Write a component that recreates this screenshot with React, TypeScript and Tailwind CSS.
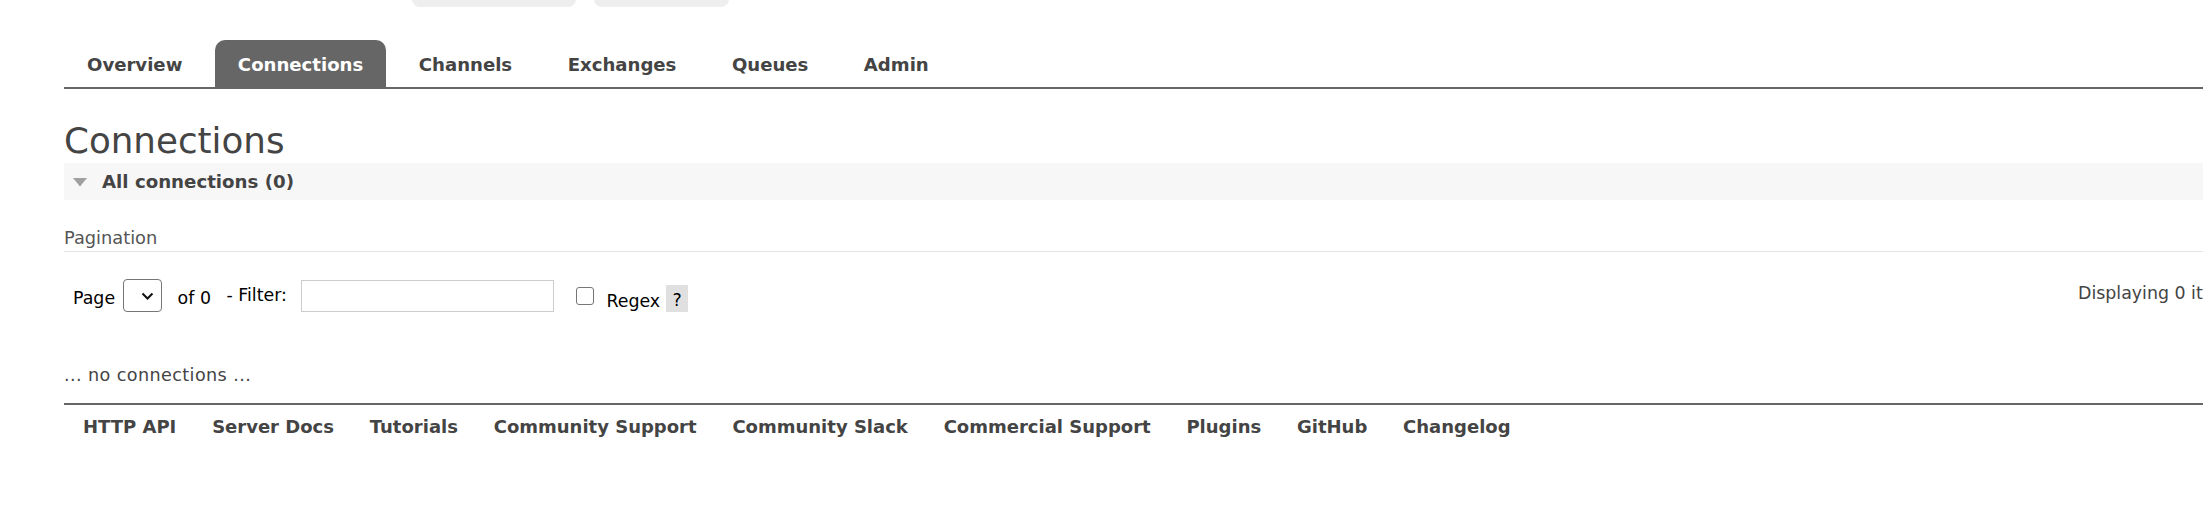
import React from "react";

const tabs = ["Overview", "Connections", "Channels", "Exchanges", "Queues", "Admin"];
const footer = [
  "HTTP API",
  "Server Docs",
  "Tutorials",
  "Community Support",
  "Community Slack",
  "Commercial Support",
  "Plugins",
  "GitHub",
  "Changelog",
];

export default function App() {
  return (
    <div
      className="w-full h-[508px] overflow-hidden bg-white text-[#444]"
      style={{ fontFamily: '"DejaVu Sans", Verdana, sans-serif' }}
    >
      {/* clipped header remnants */}
      <div className="h-[7px] overflow-hidden flex pl-[412px]">
        <div className="w-[164px] h-[30px] -mt-[23px] rounded-[8px] bg-[#eeeeee]" />
        <div className="w-[135px] h-[30px] -mt-[23px] ml-[18px] rounded-[8px] bg-[#eeeeee]" />
      </div>

      <div className="pl-[64px]">
        {/* nav */}
        <div className="mt-[33px] flex items-end border-b-2 border-[#666]">
          {tabs.map((t) => (
            <div
              key={t}
              className={
                t === "Connections"
                  ? "h-[47px] px-[23px] pt-[2px] mr-[9.5px] flex items-center rounded-t-[10px] bg-[#666] text-white font-bold text-[18.1px]"
                  : "h-[47px] px-[23px] pt-[2px] mr-[9.5px] flex items-center text-[#444] font-bold text-[18.1px]"
              }
            >
              {t}
            </div>
          ))}
        </div>

        {/* heading */}
        <h1 className="mt-[31px] text-[35.7px] leading-[42px] font-normal text-[#444]">Connections</h1>

        <div className="mt-[1px] h-[37px] bg-[#f7f7f7] flex items-center pl-[9px]">
          <svg width="14" height="9" viewBox="0 0 14 9" className="mt-[2px]">
            <polygon points="0,0 14,0 7,8.5" fill="#a0a0a0" />
          </svg>
          <span className="ml-[15px] font-bold text-[18.2px] text-[#444]">All connections (0)</span>
        </div>

        <div className="mt-[28px] text-[17.8px] leading-[20px] text-[#555] pb-[3px] border-b border-[#e2e2e2]">
          Pagination
        </div>

        {/* pagination row */}
        <div className="mt-[27px] flex items-center pl-[9px] text-[17.4px] text-black h-[33px]">
          <span className="leading-[20px] mt-[5px]">Page</span>
          <div className="ml-[7.5px] w-[39px] h-[33px] border border-[#767676] rounded-[4px] bg-white flex items-center justify-end pr-[7px]">
            <svg width="13" height="8" viewBox="0 0 13 8">
              <polyline points="1.5,1.5 6.5,6.5 11.5,1.5" fill="none" stroke="#111" strokeWidth="2" />
            </svg>
          </div>
          <span className="ml-[16px] leading-[20px] mt-[5px]">of 0</span>
          <span className="ml-[15.5px] leading-[20px] -mt-[1px]">- Filter:</span>
          <div className="ml-[14.5px] w-[253px] h-[32px] border border-[#cccccc] bg-white" />
          <div className="ml-[22px] w-[18px] h-[18px] border-[1.5px] border-[#767676] rounded-[3px] bg-white" />
          <span className="ml-[12px] leading-[20px] mt-[10px]">Regex</span>
          <div className="ml-[6px] w-[22px] h-[27px] bg-[#e0e0e0] flex items-center justify-center mt-[6px]">
            <span className="leading-[20px] mt-[2px]">?</span>
          </div>
          <div className="ml-auto w-[125px] whitespace-nowrap text-[#444] leading-[20px] -mt-[5px]">
            Displaying 0 item , page size up to:
          </div>
        </div>

        <div className="mt-[53px] text-[17.6px] tracking-[0.4px] leading-[20px] text-[#444]">
          ... no connections ...
        </div>

        {/* footer */}
        <div className="mt-[18px] border-t-2 border-[#666] pt-[11px] pl-[19px] flex gap-[35.8px] text-[18px] leading-[22px] font-bold text-[#444]">
          {footer.map((f) => (
            <span key={f}>{f}</span>
          ))}
        </div>
      </div>
    </div>
  );
}
